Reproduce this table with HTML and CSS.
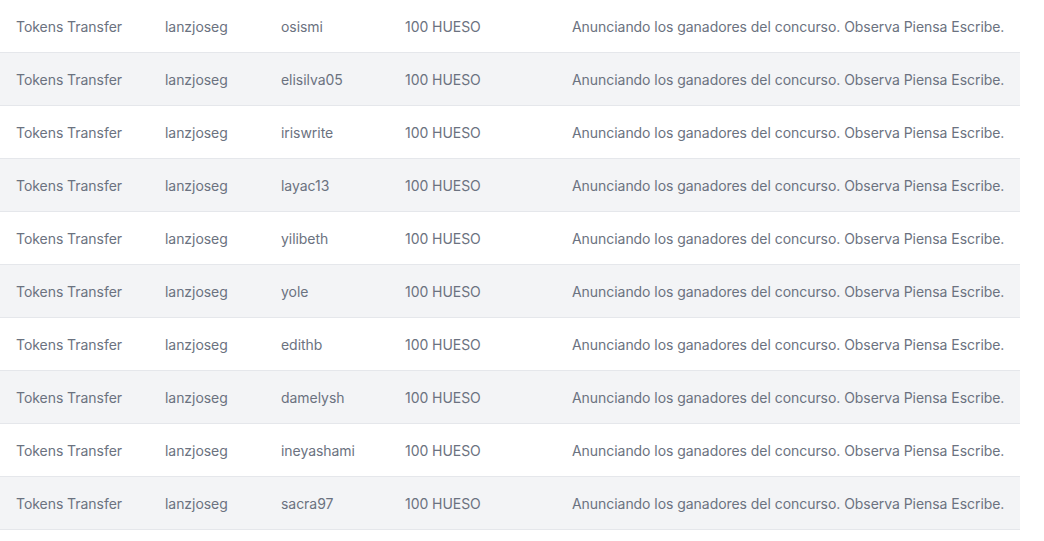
FILE: index.html
```html
<!DOCTYPE html>
<html lang="es">
<head>
<meta charset="utf-8">
<title>Transfers</title>
<link rel="stylesheet" href="styles.css">
</head>
<body>
<table class="tx-table">
  <colgroup>
    <col class="c-type"><col class="c-from"><col class="c-to"><col class="c-amount"><col class="c-memo">
  </colgroup>
  <tbody>
    <tr><td>Tokens Transfer</td><td>lanzjoseg</td><td>osismi</td><td>100 HUESO</td><td>Anunciando los ganadores del concurso. Observa Piensa Escribe.</td></tr>
    <tr><td>Tokens Transfer</td><td>lanzjoseg</td><td>elisilva05</td><td>100 HUESO</td><td>Anunciando los ganadores del concurso. Observa Piensa Escribe.</td></tr>
    <tr><td>Tokens Transfer</td><td>lanzjoseg</td><td>iriswrite</td><td>100 HUESO</td><td>Anunciando los ganadores del concurso. Observa Piensa Escribe.</td></tr>
    <tr><td>Tokens Transfer</td><td>lanzjoseg</td><td>layac13</td><td>100 HUESO</td><td>Anunciando los ganadores del concurso. Observa Piensa Escribe.</td></tr>
    <tr><td>Tokens Transfer</td><td>lanzjoseg</td><td>yilibeth</td><td>100 HUESO</td><td>Anunciando los ganadores del concurso. Observa Piensa Escribe.</td></tr>
    <tr><td>Tokens Transfer</td><td>lanzjoseg</td><td>yole</td><td>100 HUESO</td><td>Anunciando los ganadores del concurso. Observa Piensa Escribe.</td></tr>
    <tr><td>Tokens Transfer</td><td>lanzjoseg</td><td>edithb</td><td>100 HUESO</td><td>Anunciando los ganadores del concurso. Observa Piensa Escribe.</td></tr>
    <tr><td>Tokens Transfer</td><td>lanzjoseg</td><td>damelysh</td><td>100 HUESO</td><td>Anunciando los ganadores del concurso. Observa Piensa Escribe.</td></tr>
    <tr><td>Tokens Transfer</td><td>lanzjoseg</td><td>ineyashami</td><td>100 HUESO</td><td>Anunciando los ganadores del concurso. Observa Piensa Escribe.</td></tr>
    <tr><td>Tokens Transfer</td><td>lanzjoseg</td><td>sacra97</td><td>100 HUESO</td><td>Anunciando los ganadores del concurso. Observa Piensa Escribe.</td></tr>
  </tbody>
</table>
</body>
</html>
```

FILE: styles.css
```css
html, body {
  margin: 0;
  padding: 0;
  background: #ffffff;
}
body {
  font-family: Inter, "Noto Sans", sans-serif;
  font-size: 14px;
  line-height: 20px;
  color: #6b7280;
  letter-spacing: -0.05px;
}
.tx-table {
  width: 1020px;
  table-layout: fixed;
  border-collapse: collapse;
}
.c-type { width: 149px; }
.c-from { width: 116px; }
.c-to { width: 124px; }
.c-amount { width: 167px; }
.c-memo { width: 464px; }
.tx-table td {
  padding: 17px 16px 15px;
  white-space: nowrap;
  border-bottom: 1px solid #e5e7eb;
}
.tx-table tr:nth-child(even) td {
  background: #f3f4f6;
}
```
